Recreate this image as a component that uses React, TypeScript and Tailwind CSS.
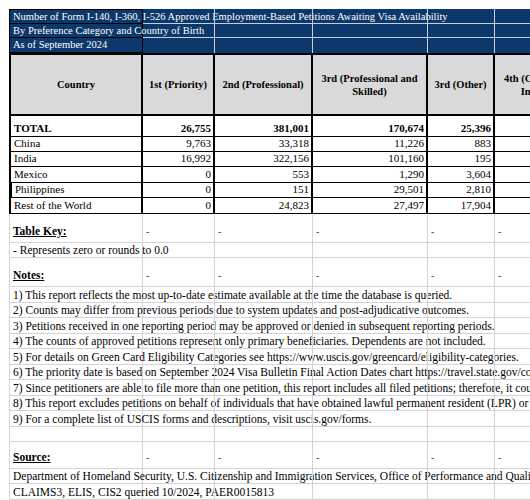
import React from "react";

const W = ["w-[134px]", "w-[72px]", "w-[98px]", "w-[115px]", "w-[67px]", "w-[110px]"];

const titles = [
  { text: "Number of Form I-140, I-360, I-526 Approved Employment-Based Petitions Awaiting Visa Availability", h: "h-[15px]" },
  { text: "By Preference Category and Country of Birth", h: "h-[14px]" },
  { text: "As of September 2024", h: "h-[15px]" },
];

const headers = ["Country", "1st (Priority)", "2nd (Professional)", "3rd (Professional and Skilled)", "3rd (Other)", "4th (Certain Special Immigrants)"];

const rows = [
  { name: "TOTAL", vals: ["26,755", "381,001", "170,674", "25,396", ""], h: "h-[21px]", bold: true },
  { name: "China", vals: ["9,763", "33,318", "11,226", "883", ""], h: "h-[15px]" },
  { name: "India", vals: ["16,992", "322,156", "101,160", "195", ""], h: "h-[15px]" },
  { name: "Mexico", vals: ["0", "553", "1,290", "3,604", ""], h: "h-[16px]" },
  { name: "Philippines", vals: ["0", "151", "29,501", "2,810", ""], h: "h-[15px]", thick: true },
  { name: "Rest of the World", vals: ["0", "24,823", "27,497", "17,904", ""], h: "h-[16px]" },
];

const notes = [
  "1) This report reflects the most up-to-date estimate available at the time the database is queried.",
  "2) Counts may differ from previous periods due to system updates and post-adjudicative outcomes.",
  "3) Petitions received in one reporting period may be approved or denied in subsequent reporting periods.",
  "4) The counts of approved petitions represent only primary beneficiaries. Dependents are not included.",
  "5) For details on Green Card Eligibility Categories see https://www.uscis.gov/greencard/eligibility-categories.",
  "6) The priority date is based on September 2024 Visa Bulletin Final Action Dates chart https://travel.state.gov/content/travel/en/legal/visa-law0/visa-bulletin.html.",
  "7) Since petitioners are able to file more than one petition, this report includes all filed petitions; therefore, it could include duplicate beneficiaries.",
  "8) This report excludes petitions on behalf of individuals that have obtained lawful permanent resident (LPR) or U.S. citizenship status.",
  "9) For a complete list of USCIS forms and descriptions, visit uscis.gov/forms.",
];

// one row of the light-grey sheet grid; text overflows from the first cell
const GridRow = ({ h, text, dashes, bottom }: { h: string; text?: React.ReactNode; dashes?: boolean; bottom?: boolean }) => (
  <div className={`flex ${h}`}>
    <div className={`${W[0]} flex shrink-0 whitespace-nowrap border-x border-b border-[#d4d4d4] pl-[3px] ${bottom ? "items-end pb-[4px]" : "items-center"}`}>
      {text}
    </div>
    {W.slice(1).map((w, j) => (
      <div key={j} className={`${w} relative flex shrink-0 items-end border-r border-b border-[#d4d4d4] pb-[5px] pl-[3px] text-[10px] leading-none text-[#444]`}>
        {dashes ? "-" : ""}
      </div>
    ))}
  </div>
);

export default function App() {
  return (
    <div className="h-[500px] w-[530px] overflow-hidden bg-white pl-[9px] pt-[9px] font-['Liberation_Serif',serif] text-black">
      <div className="w-[620px]">
        {titles.map((t, i) => (
          <div key={i} className={`flex ${t.h} bg-[#0c386b]`}>
            <div className={`${W[0]} shrink-0 whitespace-nowrap border-x border-b border-black pl-[3px] text-[10.5px] leading-[14px] text-white ${i === 0 ? "border-t" : ""}`}>
              {t.text}
            </div>
            {W.slice(1).map((w, j) => (
              <div key={j} className={`${w} relative shrink-0 border-r ${i < 2 ? "border-b" : ""} border-[#c3cfdf]`} />
            ))}
          </div>
        ))}

        <div className="flex h-[63px] border-y-2 border-black bg-[#d9d9d9] text-[10.5px] font-bold leading-[13px]">
          {headers.map((hd, i) => (
            <div key={i} className={`${W[i]} flex shrink-0 items-center justify-center border-r-2 border-black px-[2px] text-center ${i === 0 ? "border-l-2" : ""}`}>
              {hd}
            </div>
          ))}
        </div>

        {rows.map((r) => (
          <div key={r.name} className={`flex ${r.h} text-[11px] ${r.bold ? "font-bold" : ""}`}>
            <div className={`${W[0]} flex shrink-0 items-end border-b border-r-2 border-black pb-[1px] pl-[3px] leading-[13px] ${r.thick ? "border-l-[3px]" : "border-l-2"}`}>
              {r.name}
            </div>
            {r.vals.map((v, j) => (
              <div key={j} className={`${W[j + 1]} flex shrink-0 items-end justify-end border-b border-r-2 border-black pb-[1px] pr-[2px] leading-[13px]`}>
                {v}
              </div>
            ))}
          </div>
        ))}

        <div className="text-[11.5px] leading-[14px]">
          <GridRow h="h-[29px]" bottom dashes text={<span className="font-bold underline">Table Key:</span>} />
          <GridRow h="h-[15px]" text="- Represents zero or rounds to 0.0" />
          <GridRow h="h-[29px]" bottom dashes text={<span className="font-bold underline">Notes:</span>} />
          {notes.map((n, i) => (
            <GridRow key={i} h={i % 2 === 0 ? "h-[16px]" : "h-[15px]"} text={n} />
          ))}
          <GridRow h="h-[15px]" />
          <GridRow h="h-[27px]" bottom dashes text={<span className="font-bold underline">Source:</span>} />
          <GridRow h="h-[15px]" text="Department of Homeland Security, U.S. Citizenship and Immigration Services, Office of Performance and Quality, PAER" />
          <GridRow h="h-[16px]" text="CLAIMS3, ELIS, CIS2 queried 10/2024, PAER0015813" />
        </div>
      </div>
    </div>
  );
}
